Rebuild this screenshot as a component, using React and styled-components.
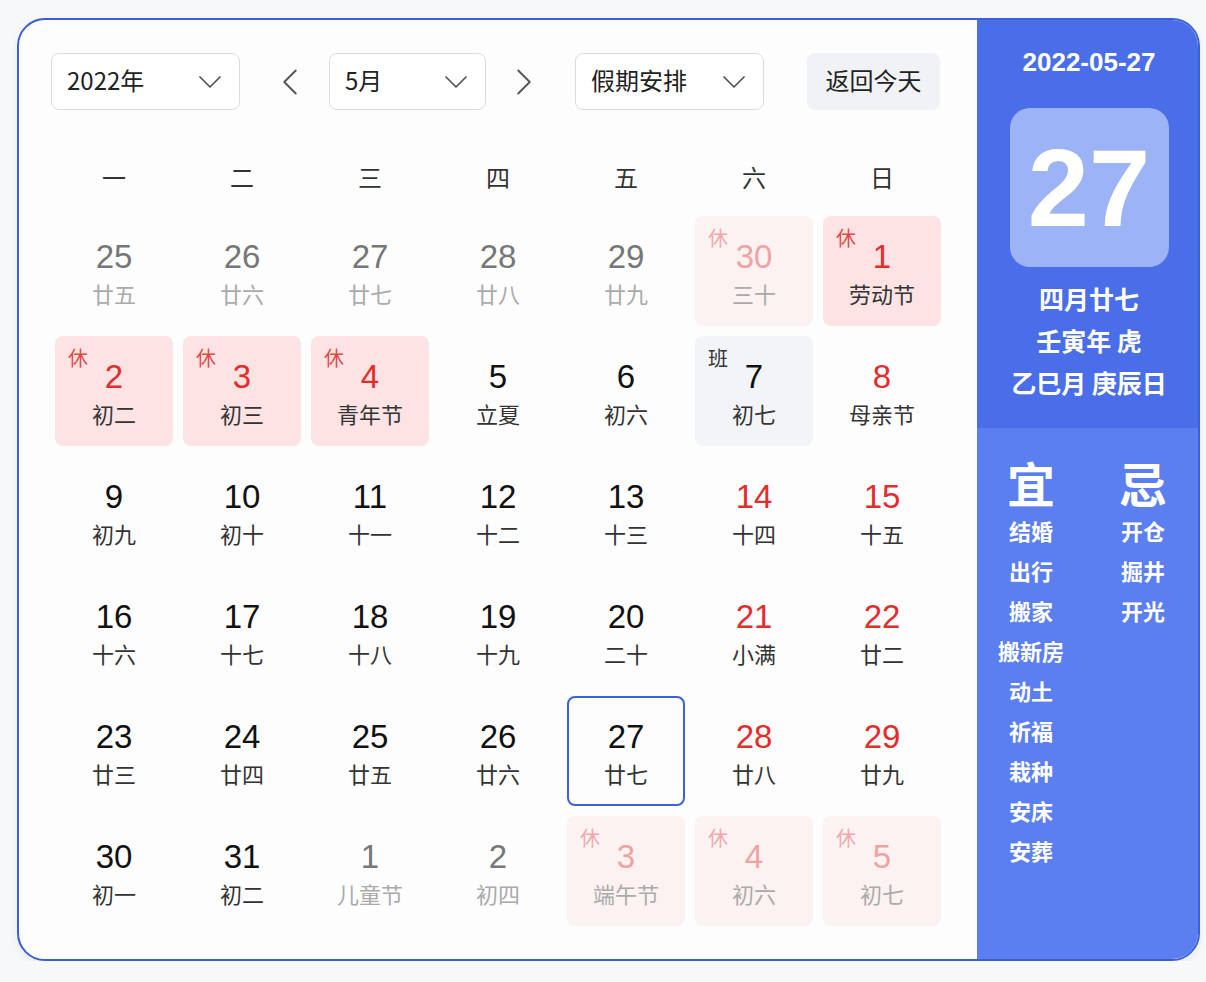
import React from 'react'
import styled, { createGlobalStyle } from 'styled-components'
import { ChevronDown, ChevronLeft, ChevronRight } from 'lucide-react'

const GlobalStyle = createGlobalStyle`
  body {
    margin: 0;
    background: #f7f8fa;
    font-family: "Liberation Sans", "Noto Sans CJK SC", sans-serif;
  }
`

const Page = styled.div`
  padding: 18px 0 0 17px;
`

const Card = styled.div`
  width: 1183px;
  height: 943px;
  box-sizing: border-box;
  border: 2px solid #3a60d8;
  border-radius: 28px;
  overflow: hidden;
  display: flex;
  background: #fdfdfe;
  box-shadow: 0 4px 10px rgba(0, 0, 0, 0.06);
`

const Main = styled.div`
  width: 958px;
  box-sizing: border-box;
  padding: 33px 36px 0 36px;
`

const Toolbar = styled.div`
  display: flex;
  align-items: center;
  margin-left: -4px;
  height: 57px;
`

const Select = styled.div`
  width: ${p => p.w}px;
  height: 57px;
  box-sizing: border-box;
  border: 1px solid #d9dce3;
  border-radius: 8px;
  background: #fff;
  display: flex;
  align-items: center;
  justify-content: space-between;
  padding: 0 9px 3px 15px;
  font-size: 24px;
  line-height: 30px;
  color: #222;
  font-family: "Noto Sans CJK SC", sans-serif;
  svg { margin-top: 3px; flex-shrink: 0; }
`

const ArrowBtn = styled.div`
  display: flex;
  align-items: center;
  justify-content: center;
  flex-shrink: 0;
  width: 46px;
  margin: 0 ${p => p.mr}px 0 ${p => p.ml}px;
  color: #555;
  svg { flex-shrink: 0; }
`

const TodayBtn = styled.div`
  margin-left: 43px;
  width: 133px;
  height: 57px;
  box-sizing: border-box;
  padding-bottom: 3px;
  border-radius: 8px;
  background: #f1f2f5;
  display: flex;
  align-items: center;
  justify-content: center;
  font-size: 24px;
  line-height: 30px;
  color: #222;
  font-family: "Noto Sans CJK SC", sans-serif;
`

const WeekRow = styled.div`
  display: grid;
  grid-template-columns: repeat(7, 118px);
  column-gap: 10px;
  margin: 47px 0 19px;
  height: 40px;
`

const WeekDay = styled.div`
  text-align: center;
  line-height: 40px;
  font-size: 24px;
  color: #333;
  font-family: "Noto Sans CJK SC", sans-serif;
`

const Grid = styled.div`
  display: grid;
  grid-template-columns: repeat(7, 118px);
  grid-auto-rows: 110px;
  gap: 10px;
`

const cellBg = {
  rest: '#fde3e3',
  restDim: '#fdf2f2',
  work: '#f2f4f7',
  none: 'transparent',
}

const Cell = styled.div`
  position: relative;
  box-sizing: border-box;
  border-radius: 8px;
  background: ${p => cellBg[p.kind]};
  border: ${p => (p.today ? '2px solid #3b62d6' : '2px solid transparent')};
  display: flex;
  flex-direction: column;
  align-items: center;
  padding-top: 21px;
`

const Num = styled.div`
  font-size: 33px;
  line-height: 36px;
  color: ${p => p.color};
`

const Lunar = styled.div`
  margin-top: 4px;
  font-size: 22px;
  line-height: 28px;
  color: ${p => p.color};
  font-family: "Noto Sans CJK SC", sans-serif;
`

const Tag = styled.span`
  position: absolute;
  top: 8px;
  left: 11px;
  font-size: 20px;
  line-height: 24px;
  color: ${p => p.color};
  font-family: "Noto Sans CJK SC", sans-serif;
`

const Side = styled.div`
  flex: 1;
  display: flex;
  flex-direction: column;
  color: #fff;
  font-family: "Noto Sans CJK SC", sans-serif;
`

const SideTop = styled.div`
  background: #4a6ee8;
  display: flex;
  flex-direction: column;
  align-items: center;
  padding: 24px 0 25px;
`

const DateText = styled.div`
  font-size: 26px;
  line-height: 36px;
  font-weight: 700;
  font-family: "Liberation Sans", sans-serif;
`

const DayBox = styled.div`
  margin-top: 28px;
  width: 159px;
  height: 159px;
  border-radius: 20px;
  background: #9cb3f6;
  display: flex;
  align-items: center;
  justify-content: center;
  font-size: 110px;
  font-weight: 700;
  font-family: "Liberation Sans", sans-serif;
`

const LunarLines = styled.div`
  margin-top: 10px;
  text-align: center;
  font-size: 25px;
  line-height: 42px;
  font-weight: 700;
`

const SideBottom = styled.div`
  flex: 1;
  background: #5b7ff0;
  display: grid;
  grid-template-columns: 108px 116px;
  align-items: start;
  padding-top: 26px;
`

const Col = styled.div`
  display: flex;
  flex-direction: column;
  align-items: center;
`

const ColHead = styled.div`
  font-size: 48px;
  line-height: 56px;
  font-weight: 700;
`

const Item = styled.div`
  font-size: 22px;
  line-height: 40px;
  font-weight: 700;
  white-space: nowrap;
`

const RED = '#e42c2c'

// kind: rest | restDim | work | none ; tone: dim | normal | red | redDim
const days = [
  { n: 25, l: '廿五', tone: 'dim' },
  { n: 26, l: '廿六', tone: 'dim' },
  { n: 27, l: '廿七', tone: 'dim' },
  { n: 28, l: '廿八', tone: 'dim' },
  { n: 29, l: '廿九', tone: 'dim' },
  { n: 30, l: '三十', tone: 'redDim', kind: 'restDim', tag: '休' },
  { n: 1, l: '劳动节', tone: 'red', kind: 'rest', tag: '休' },
  { n: 2, l: '初二', tone: 'red', kind: 'rest', tag: '休' },
  { n: 3, l: '初三', tone: 'red', kind: 'rest', tag: '休' },
  { n: 4, l: '青年节', tone: 'red', kind: 'rest', tag: '休' },
  { n: 5, l: '立夏' },
  { n: 6, l: '初六' },
  { n: 7, l: '初七', kind: 'work', tag: '班' },
  { n: 8, l: '母亲节', tone: 'red' },
  { n: 9, l: '初九' },
  { n: 10, l: '初十' },
  { n: 11, l: '十一' },
  { n: 12, l: '十二' },
  { n: 13, l: '十三' },
  { n: 14, l: '十四', tone: 'red' },
  { n: 15, l: '十五', tone: 'red' },
  { n: 16, l: '十六' },
  { n: 17, l: '十七' },
  { n: 18, l: '十八' },
  { n: 19, l: '十九' },
  { n: 20, l: '二十' },
  { n: 21, l: '小满', tone: 'red' },
  { n: 22, l: '廿二', tone: 'red' },
  { n: 23, l: '廿三' },
  { n: 24, l: '廿四' },
  { n: 25, l: '廿五' },
  { n: 26, l: '廿六' },
  { n: 27, l: '廿七', today: true },
  { n: 28, l: '廿八', tone: 'red' },
  { n: 29, l: '廿九', tone: 'red' },
  { n: 30, l: '初一' },
  { n: 31, l: '初二' },
  { n: 1, l: '儿童节', tone: 'dim' },
  { n: 2, l: '初四', tone: 'dim' },
  { n: 3, l: '端午节', tone: 'redDim', kind: 'restDim', tag: '休' },
  { n: 4, l: '初六', tone: 'redDim', kind: 'restDim', tag: '休' },
  { n: 5, l: '初七', tone: 'redDim', kind: 'restDim', tag: '休' },
]

const tones = {
  normal: { num: '#111', lunar: '#333' },
  red: { num: RED, lunar: '#333' },
  dim: { num: '#777', lunar: '#aaa' },
  redDim: { num: '#f0a3a3', lunar: '#aaa' },
}

const yi = ['结婚', '出行', '搬家', '搬新房', '动土', '祈福', '栽种', '安床', '安葬']
const ji = ['开仓', '掘井', '开光']

const DayCell = ({ d }) => {
  const t = tones[d.tone || 'normal']
  const tagColor = d.tag === '班' ? '#333' : d.kind === 'restDim' ? '#f2a8a8' : '#e24a4a'
  return (
    <Cell kind={d.kind || 'none'} today={d.today}>
      {d.tag && <Tag color={tagColor}>{d.tag}</Tag>}
      <Num color={t.num}>{d.n}</Num>
      <Lunar color={t.lunar}>{d.l}</Lunar>
    </Cell>
  )
}

const Chevron = () => <ChevronDown size={40} strokeWidth={1.05} color="#555" />

const App = () => (
  <Page>
    <GlobalStyle />
    <Card>
      <Main>
        <Toolbar>
          <Select w={189}>
            <span>2022年</span>
            <Chevron />
          </Select>
          <ArrowBtn ml={27} mr={16}>
            <ChevronLeft size={46} strokeWidth={1} />
          </ArrowBtn>
          <Select w={157}>
            <span>5月</span>
            <Chevron />
          </Select>
          <ArrowBtn ml={15} mr={28}>
            <ChevronRight size={46} strokeWidth={1} />
          </ArrowBtn>
          <Select w={189}>
            <span>假期安排</span>
            <Chevron />
          </Select>
          <TodayBtn>返回今天</TodayBtn>
        </Toolbar>
        <WeekRow>
          {['一', '二', '三', '四', '五', '六', '日'].map(w => (
            <WeekDay key={w}>{w}</WeekDay>
          ))}
        </WeekRow>
        <Grid>
          {days.map((d, i) => (
            <DayCell key={i} d={d} />
          ))}
        </Grid>
      </Main>
      <Side>
        <SideTop>
          <DateText>2022-05-27</DateText>
          <DayBox>27</DayBox>
          <LunarLines>
            <div>四月廿七</div>
            <div>壬寅年 虎</div>
            <div>乙巳月 庚辰日</div>
          </LunarLines>
        </SideTop>
        <SideBottom>
          <Col>
            <ColHead>宜</ColHead>
            {yi.map(x => <Item key={x}>{x}</Item>)}
          </Col>
          <Col>
            <ColHead>忌</ColHead>
            {ji.map(x => <Item key={x}>{x}</Item>)}
          </Col>
        </SideBottom>
      </Side>
    </Card>
  </Page>
)

export default App
